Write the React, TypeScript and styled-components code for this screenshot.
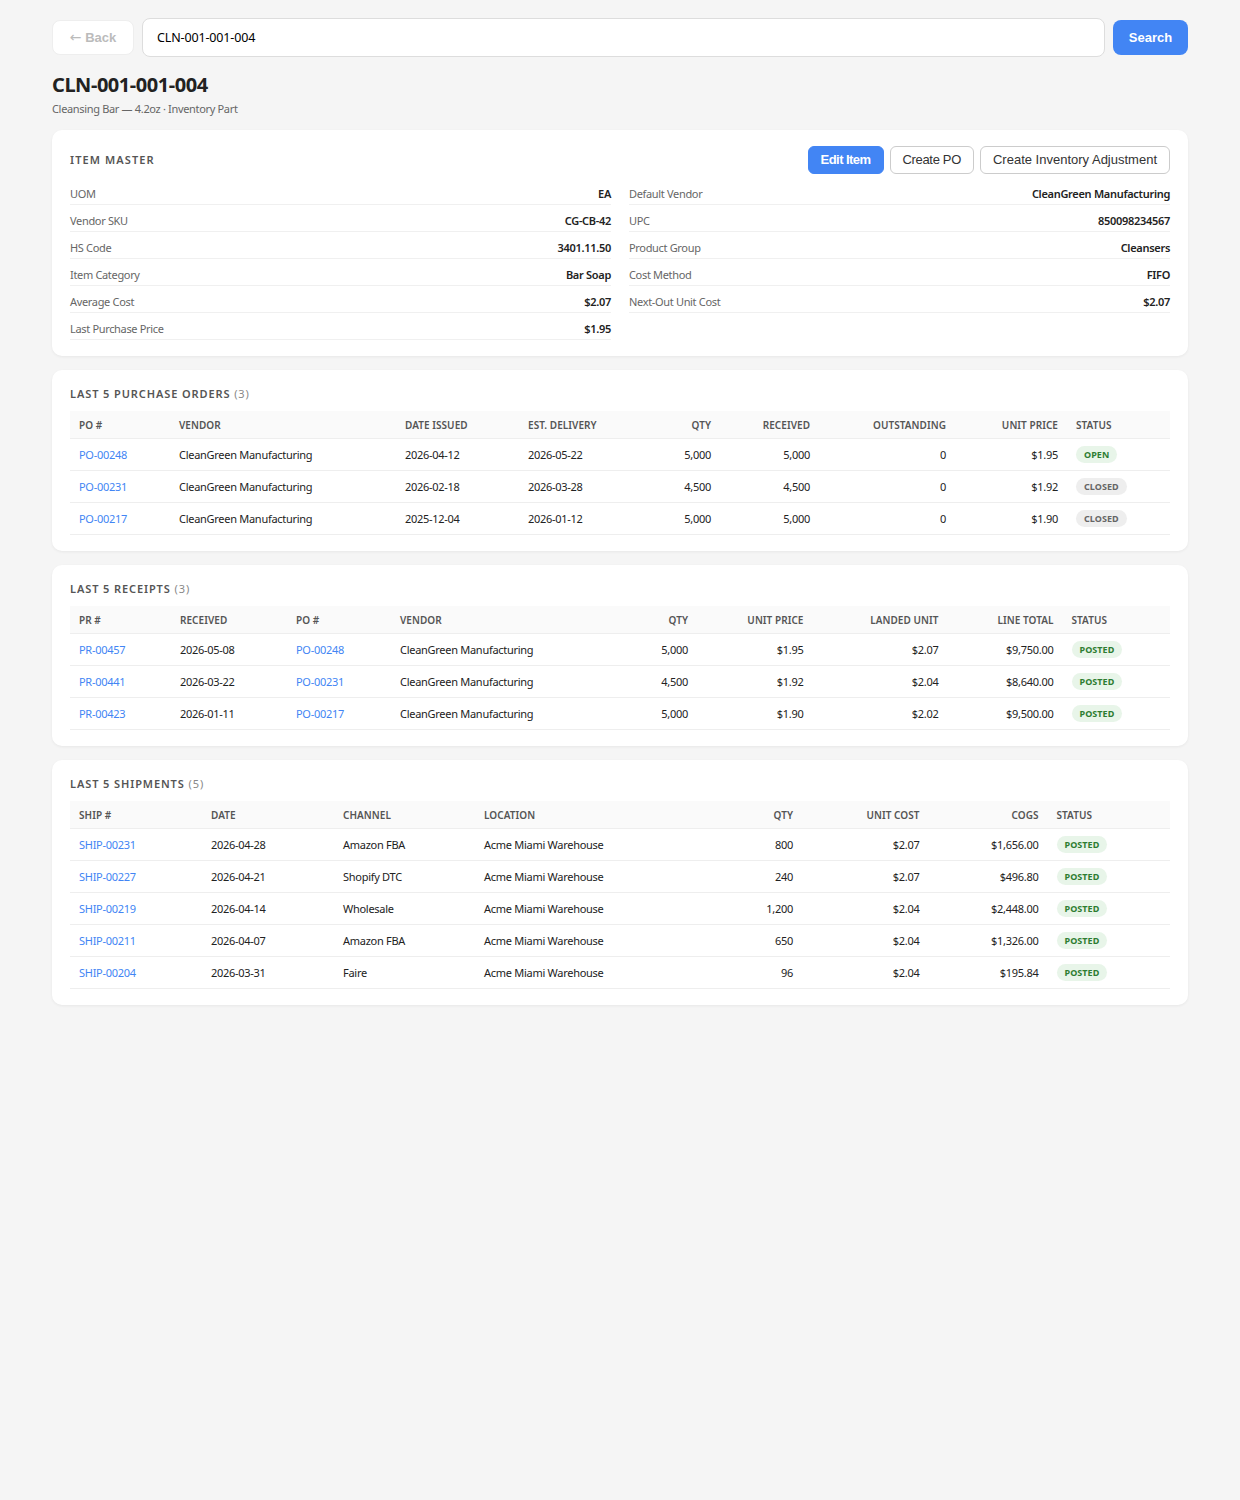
import React from 'react';
import styled, { createGlobalStyle } from 'styled-components';

const Global = createGlobalStyle`
  * { box-sizing: border-box; }
  html, body { margin: 0; padding: 0; background: #f5f5f5; }
  body { font-family: "Noto Sans", "Open Sans", sans-serif; color: #222; }
`;
const Page = styled.div`
  width: 1200px; margin: 0 auto; padding: 18px 32px 32px; min-height: 1500px;
`;
const TopBar = styled.div`
  display: flex; align-items: center; gap: 8px; margin-bottom: 14px;
`;
const BackButton = styled.button`
  height: 35px; width: 82px; padding: 0 0 1px; border: 1px solid #eee; border-radius: 8px; background: #fff;
  color: #bbb; font: 700 13px "Liberation Sans", Arial, sans-serif;
`;
const BackArrow = styled.span`
  font: 400 14px "DejaVu Sans", sans-serif;
`;
const SearchInput = styled.input`
  flex: 1; height: 39px; border: 1px solid #ddd; border-radius: 8px; background: #fff;
  padding: 0 14px; font: 400 12.5px "Noto Sans", sans-serif; letter-spacing: -.15px; color: #000; outline: none;
`;
const SearchButton = styled.button`
  height: 35px; width: 75px; padding: 0 0 1px; border: 0; border-radius: 8px; background: #4285f4; color: #fff;
  font: 700 13px "Liberation Sans", Arial, sans-serif;
`;
const Title = styled.h1`
  margin: 0; font-size: 20px; line-height: 27px; font-weight: 700; color: #222; letter-spacing: -.45px;
`;
const Subtitle = styled.div`
  margin: 3px 0 14px; font-size: 11px; line-height: 15px; color: #666; letter-spacing: -.33px;
`;
const Card = styled.section`
  background: #fff; border-radius: 10px; padding: 16px 18px; margin-bottom: 14px;
  box-shadow: 0 1px 3px rgba(0,0,0,.06);
`;
const MasterHead = styled.div`
  display: flex; justify-content: space-between; align-items: center; margin-bottom: 4px;
`;
const SectionTitle = styled.h2`
  margin: 0; font-size: 11px; line-height: 16px; font-weight: 600; color: #555; letter-spacing: .9px; text-transform: uppercase;
  span { font-weight: 400; color: #888; }
`;
const MasterTitle = styled(SectionTitle)` letter-spacing: 1.1px; `;
const Actions = styled.div`
  display: flex; gap: 6px;
`;
const ActionButton = styled.button<{ $primary?: boolean; $tracking?: number }>`
  height: 28px; padding: 0 12px 2px; border-radius: 6px; cursor: pointer;
  font: ${p => (p.$primary ? 700 : 400)} 13px "Liberation Sans", Arial, sans-serif;
  letter-spacing: ${p => p.$tracking ?? 0}px;
  background: ${p => (p.$primary ? '#4285f4' : '#fff')};
  color: ${p => (p.$primary ? '#fff' : '#333')};
  border: 1px solid ${p => (p.$primary ? '#4285f4' : '#ccc')};
`;
const FieldGrid = styled.div`
  display: grid; grid-template-columns: 1fr 1fr; column-gap: 18px;
`;
const Field = styled.div`
  display: flex; justify-content: space-between; align-items: center; height: 27px; padding-top: 5px;
  border-bottom: 1px solid #f0f0f0; font-size: 11px;
`;
const FieldLabel = styled.span` color: #666; letter-spacing: -.33px; `;
const FieldValue = styled.span` font-weight: 600; color: #222; letter-spacing: -.3px; `;
const TableTitle = styled(SectionTitle)` margin-bottom: 9px; `;
const Table = styled.table`
  width: 100%; table-layout: fixed; border-collapse: separate; border-spacing: 0; font-size: 11px; letter-spacing: -.28px;
`;
const Th = styled.th<{ $right?: boolean; $w: number }>`
  width: ${p => p.$w}px; height: 28px; padding: 1px 9px 0; background: #fafafa; border-bottom: 1px solid #eee;
  font-size: 10px; font-weight: 600; color: #555; letter-spacing: .05px; text-transform: uppercase;
  text-align: ${p => (p.$right ? 'right' : 'left')}; white-space: nowrap;
`;
const Td = styled.td<{ $right?: boolean }>`
  height: 32px; padding: 0 9px; border-bottom: 1px solid #eee; color: #222;
  text-align: ${p => (p.$right ? 'right' : 'left')}; white-space: nowrap;
`;
const DocLink = styled.a` color: #4285f4; text-decoration: none; `;
const Badge = styled.span<{ $tone: 'green' | 'gray' }>`
  display: inline-block; padding: 2px 8px; border-radius: 10px; font-size: 9px; line-height: 13px;
  font-weight: 700; letter-spacing: .05px; text-transform: uppercase;
  background: ${p => (p.$tone === 'green' ? '#e8f5e9' : '#eeeeee')};
  color: ${p => (p.$tone === 'green' ? '#2e7d32' : '#666')};
`;

const fields: [string, string][] = [
  ['UOM', 'EA'], ['Default Vendor', 'CleanGreen Manufacturing'],
  ['Vendor SKU', 'CG-CB-42'], ['UPC', '850098234567'],
  ['HS Code', '3401.11.50'], ['Product Group', 'Cleansers'],
  ['Item Category', 'Bar Soap'], ['Cost Method', 'FIFO'],
  ['Average Cost', '$2.07'], ['Next-Out Unit Cost', '$2.07'],
  ['Last Purchase Price', '$1.95'],
];

type Col = { h: string; w: number; right?: boolean; link?: boolean; status?: boolean };
const V = 'CleanGreen Manufacturing';
const A = 'Acme Miami Warehouse';
const tables: { title: string; count: number; cols: Col[]; rows: string[][] }[] = [
  {
    title: 'Last 5 Purchase Orders', count: 3,
    cols: [{ h: 'PO #', w: 100, link: true }, { h: 'Vendor', w: 226 }, { h: 'Date Issued', w: 123 }, { h: 'Est. Delivery', w: 130 }, { h: 'Qty', w: 71, right: true }, { h: 'Received', w: 99, right: true }, { h: 'Outstanding', w: 136, right: true }, { h: 'Unit Price', w: 112, right: true }, { h: 'Status', w: 103, status: true }],
    rows: [
      ['PO-00248', V, '2026-04-12', '2026-05-22', '5,000', '5,000', '0', '$1.95', 'Open'],
      ['PO-00231', V, '2026-02-18', '2026-03-28', '4,500', '4,500', '0', '$1.92', 'Closed'],
      ['PO-00217', V, '2025-12-04', '2026-01-12', '5,000', '5,000', '0', '$1.90', 'Closed'],
    ],
  },
  {
    title: 'Last 5 Receipts', count: 3,
    cols: [{ h: 'PR #', w: 101, link: true }, { h: 'Received', w: 116 }, { h: 'PO #', w: 104, link: true }, { h: 'Vendor', w: 240 }, { h: 'Qty', w: 66, right: true }, { h: 'Unit Price', w: 115.5, right: true }, { h: 'Landed Unit', w: 135, right: true }, { h: 'Line Total', w: 115, right: true }, { h: 'Status', w: 107.5, status: true }],
    rows: [
      ['PR-00457', '2026-05-08', 'PO-00248', V, '5,000', '$1.95', '$2.07', '$9,750.00', 'Posted'],
      ['PR-00441', '2026-03-22', 'PO-00231', V, '4,500', '$1.92', '$2.04', '$8,640.00', 'Posted'],
      ['PR-00423', '2026-01-11', 'PO-00217', V, '5,000', '$1.90', '$2.02', '$9,500.00', 'Posted'],
    ],
  },
  {
    title: 'Last 5 Shipments', count: 5,
    cols: [{ h: 'Ship #', w: 132, link: true }, { h: 'Date', w: 132 }, { h: 'Channel', w: 141 }, { h: 'Location', w: 260 }, { h: 'Qty', w: 67, right: true }, { h: 'Unit Cost', w: 126.5, right: true }, { h: 'COGS', w: 119, right: true }, { h: 'Status', w: 122.5, status: true }],
    rows: [
      ['SHIP-00231', '2026-04-28', 'Amazon FBA', A, '800', '$2.07', '$1,656.00', 'Posted'],
      ['SHIP-00227', '2026-04-21', 'Shopify DTC', A, '240', '$2.07', '$496.80', 'Posted'],
      ['SHIP-00219', '2026-04-14', 'Wholesale', A, '1,200', '$2.04', '$2,448.00', 'Posted'],
      ['SHIP-00211', '2026-04-07', 'Amazon FBA', A, '650', '$2.04', '$1,326.00', 'Posted'],
      ['SHIP-00204', '2026-03-31', 'Faire', A, '96', '$2.04', '$195.84', 'Posted'],
    ],
  },
];

export default function App() {
  return (
    <Page>
      <Global />
      <TopBar>
        <BackButton><BackArrow>←</BackArrow> Back</BackButton>
        <SearchInput defaultValue="CLN-001-001-004" />
        <SearchButton>Search</SearchButton>
      </TopBar>
      <Title>CLN-001-001-004</Title>
      <Subtitle>Cleansing Bar — 4.2oz · Inventory Part</Subtitle>
      <Card>
        <MasterHead>
          <MasterTitle>Item Master</MasterTitle>
          <Actions>
            <ActionButton $primary $tracking={-0.55}>Edit Item</ActionButton>
            <ActionButton $tracking={-0.33}>Create PO</ActionButton>
            <ActionButton>Create Inventory Adjustment</ActionButton>
          </Actions>
        </MasterHead>
        <FieldGrid>
          {fields.map(([l, v]) => (
            <Field key={l}><FieldLabel>{l}</FieldLabel><FieldValue>{v}</FieldValue></Field>
          ))}
        </FieldGrid>
      </Card>
      {tables.map(t => (
        <Card key={t.title}>
          <TableTitle>{t.title} <span>({t.count})</span></TableTitle>
          <Table>
            <thead>
              <tr>{t.cols.map(c => <Th key={c.h} $w={c.w} $right={c.right}>{c.h}</Th>)}</tr>
            </thead>
            <tbody>
              {t.rows.map(r => (
                <tr key={r[0]}>
                  {r.map((v, i) => {
                    const c = t.cols[i];
                    return (
                      <Td key={i} $right={c.right}>
                        {c.link ? <DocLink href="#">{v}</DocLink>
                          : c.status ? <Badge $tone={v === 'Closed' ? 'gray' : 'green'}>{v}</Badge>
                          : v}
                      </Td>
                    );
                  })}
                </tr>
              ))}
            </tbody>
          </Table>
        </Card>
      ))}
    </Page>
  );
}
